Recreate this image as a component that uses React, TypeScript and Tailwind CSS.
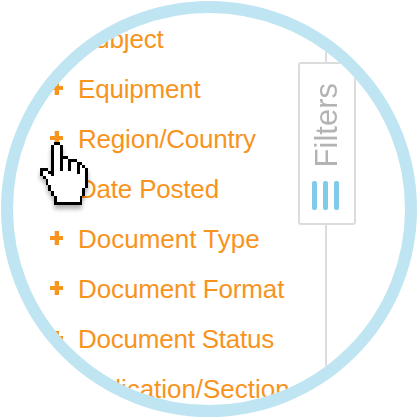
const categories = [
  { name: 'Subject', fit: 'tracking-[-0.15px]' },
  { name: 'Equipment', fit: 'tracking-[-0.2px]' },
  { name: 'Region/Country', fit: 'tracking-[-0.2px]' },
  { name: 'Date Posted', fit: 'tracking-[-0.2px]' },
  { name: 'Document Type', fit: 'tracking-normal' },
  { name: 'Document Format', fit: 'tracking-[-0.12px]' },
  { name: 'Document Status', fit: 'tracking-[-0.23px]' },
  { name: 'Publication/Section', fit: '-ml-[9px] tracking-[-0.03px]' },
];

// Pixel map of the hand cursor: X = outline, o = fill
const hand = [
  '.....XX..........',
  '....XooX.........',
  '....XooX.........',
  '....XooX.........',
  '....XooX.........',
  '....XooXXX.......',
  '....XooXooXXX....',
  '....XooXooXooXX..',
  '....XooXooXooXoX.',
  'XXX.XooXooXooXooX',
  'XooXXooooooooXooX',
  'XoooXoooooooooooX',
  '.XooooooooooooooX',
  '..XoooooooooooooX',
  '..XoooooooooooooX',
  '...XooooooooooooX',
  '...XoooooooooooX.',
  '....XooooooooooX.',
  '....XooooooooooX.',
  '.....XooooooooX..',
  '.....XooooooooX..',
  '.....XXXXXXXXXX..',
];

function HandCursor() {
  return (
    <svg
      className="absolute left-[27px] top-[129px] h-[63px] w-[48px] overflow-visible drop-shadow-[0_4px_2px_rgba(0,0,0,0.3)]"
      viewBox="0 0 17 22"
      preserveAspectRatio="none"
      shapeRendering="crispEdges"
    >
      {hand.flatMap((row, y) =>
        row.split('').map((cell, x) =>
          cell === '.' ? null : (
            <rect key={`${x}-${y}`} x={x} y={y} width="1" height="1" fill={cell === 'X' ? '#000' : '#fff'} />
          ),
        ),
      )}
    </svg>
  );
}

function Plus() {
  return (
    <svg className="mb-[2px] h-[14px] w-[13px] shrink-0" viewBox="0 0 13 14" fill="#f7941e">
      <rect x="0" y="5" width="13" height="4" />
      <rect x="4.7" y="0" width="4.3" height="14" />
    </svg>
  );
}

export default function App() {
  return (
    <div className="h-[420px] w-[420px] overflow-hidden bg-white pl-px pt-px font-['Liberation_Sans',Arial,sans-serif]">
      <div className="relative flex h-[416px] w-[416px] overflow-hidden rounded-full border-[12px] border-[#bfe5f2] bg-white">
        <ul className="w-[285px] shrink-0 pl-[37px] pt-px">
          {categories.map(({ name, fit }) => (
            <li key={name} className="flex h-[50px] items-center gap-[15px] whitespace-nowrap text-[26px] leading-[50px] text-[#f7941e]">
              <Plus />
              <span className={fit}>{name}</span>
            </li>
          ))}
        </ul>
        <div className="flex h-full w-[58px] shrink-0 flex-col">
          <div className="ml-[27px] h-[49px] w-[2px] bg-[#dcdcdc]" />
          <div className="flex h-[163px] w-[58px] shrink-0 flex-col items-center justify-end rounded-[3px] border-2 border-[#dcdcdc] bg-white pb-[13px]">
            <span className="mb-[14px] rotate-180 text-[31px] leading-[34px] text-[#b3b3b3] [writing-mode:vertical-rl]">Filters</span>
            <div className="flex h-[29px] gap-[6px] self-start pl-[12px]">
              <i className="w-[5px] rounded-[2px] bg-[#7fcbe9]" />
              <i className="w-[5px] rounded-[2px] bg-[#7fcbe9]" />
              <i className="w-[5px] rounded-[2px] bg-[#7fcbe9]" />
            </div>
          </div>
          <div className="ml-[27px] w-[2px] flex-1 bg-[#dcdcdc]" />
        </div>
        <HandCursor />
      </div>
    </div>
  );
}
